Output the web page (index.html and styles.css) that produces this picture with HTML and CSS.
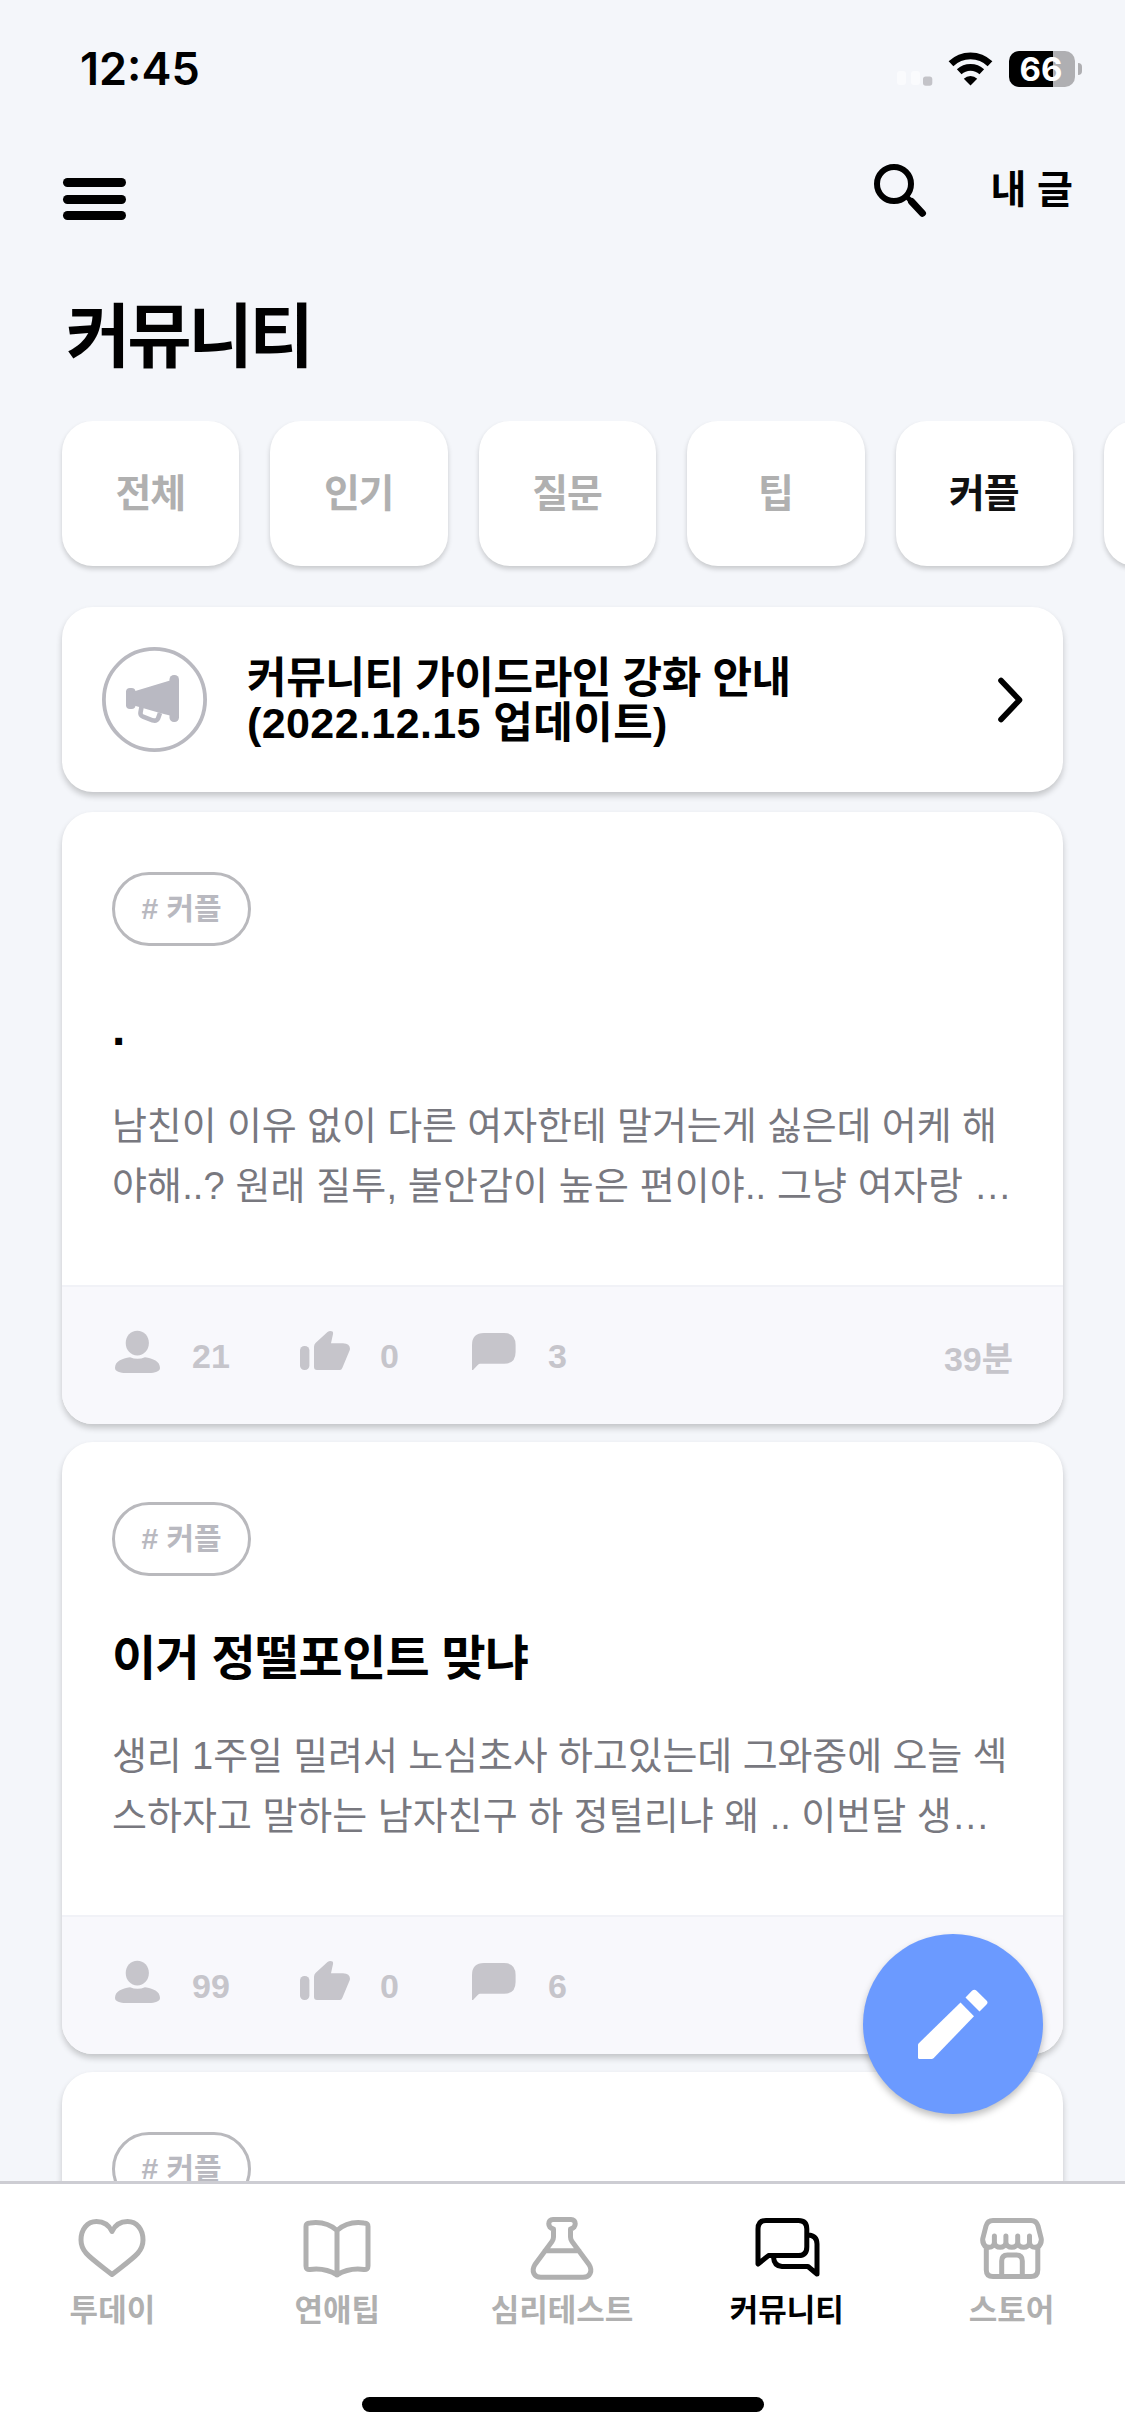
FILE: index.html
```html
<!DOCTYPE html>
<html lang="ko">
<head>
<meta charset="utf-8">
<title>커뮤니티</title>
<link rel="stylesheet" href="styles.css">
</head>
<body>
<svg class="defs" aria-hidden="true">
  <symbol id="person" viewBox="0 0 50 44">
    <path d="M25.3.7c6.6 0 11.600 5.200 11.600 12.300s-5 12.400-11.600 12.400-11.600-5.300-11.600-12.400S18.700.700 25.300.700z"/>
    <path d="M18 27.200Q25.500 30.500 33 27.200C41 28.500 48 31 48 38 48 41.500 43 43 37 43H14C8 43 3 41.500 3 38 3 31 10 28.500 18 27.200z"/>
  </symbol>
  <symbol id="thumb" viewBox="0 0 50 44">
    <rect x="0" y="16" width="9.400" height="24" rx="4.500"/>
    <path d="M14 17Q14 14.500 15.500 13L27.500 2Q30 .200 32.500 1.500 33.500 2.500 32.800 5L31 13.300H43Q51 14 49.800 20L42.500 37.500Q41.500 40 40 40H17Q14 40 14 37z"/>
  </symbol>
  <symbol id="bubble" viewBox="0 0 46 44">
    <path d="M0 40V15Q0 3 12 3H32Q43.600 3 43.600 15V22Q43.600 33.800 32 33.800H8Q7 33.800 6 34.800L1 40z"/>
  </symbol>
</svg>

<div class="status">
  <span class="clock">12:45</span>
  <div class="status-icons">
    <svg class="signal" width="38" height="16" viewBox="0 0 38 16">
      <rect x="2" y="1" width="9" height="14" rx="3" fill="#fafbfd"/>
      <rect x="16" y="1" width="9" height="14" rx="3" fill="#fafbfd"/>
      <rect x="28" y="6.500" width="9.300" height="9.300" rx="2.800" fill="#c3c3c8"/>
    </svg>
    <svg class="wifi" width="45" height="34" viewBox="0 0 45 34">
      <path d="M3 11.800A28 28 0 0 1 42 11.800M11.200 19.800A16.600 16.600 0 0 1 33.800 19.800" fill="none" stroke="#000" stroke-width="6.800"/>
      <path d="M22.500 33.500L15.800 26.800A9.600 9.600 0 0 1 29.200 26.800z"/>
    </svg>
    <div class="battery"><span>66</span></div>
    <i class="battery-cap"></i>
  </div>
</div>

<header class="topbar">
  <button class="menu" aria-label="메뉴"><i></i><i></i><i></i></button>
  <div class="top-actions">
    <svg width="56" height="56" viewBox="0 0 56 56" fill="none" stroke="#000" stroke-linecap="round">
      <circle cx="22" cy="22" r="17" stroke-width="6"/>
      <path d="M35 35l4 4" stroke-width="5"/>
      <path d="M39.500 39.500L50.500 51.300" stroke-width="7"/>
    </svg>
    <span class="mine">내 글</span>
  </div>
</header>

<h1>커뮤니티</h1>

<nav class="chips">
  <span>전체</span><span>인기</span><span>질문</span><span>팁</span><span class="on">커플</span><span></span>
</nav>

<main class="feed">
  <section class="notice">
    <svg width="105" height="105" viewBox="0 0 105 105" fill="#b9b9c2">
      <circle cx="52.500" cy="52.500" r="50.600" fill="none" stroke="#b9b9c0" stroke-width="3.800"/>
      <rect x="24" y="41" width="9.500" height="21" rx="4"/>
      <rect x="24" y="44" width="4" height="15"/>
      <path d="M30 45L68 33.500Q73 40 77 40V65Q73 65 70 69L58 66 32 58.500z"/>
      <rect x="67.500" y="28" width="9.500" height="47" rx="4.500"/>
      <path d="M39.500 60L38.500 65.500Q38 68.500 41 69.700L50.500 73.300Q54.500 74.500 56 71.500L58 66" fill="none" stroke="#b9b9c2" stroke-width="4.600"/>
    </svg>
    <p><span class="l1">커뮤니티 가이드라인 강화 안내</span><br><span class="l2">(2022.12.15 업데이트)</span></p>
    <svg class="chevron" width="28" height="48" viewBox="0 0 28 48" fill="none" stroke="#000" stroke-width="5.600" stroke-linecap="round" stroke-linejoin="round"><path d="M4 4.500L22.500 24 4 43.500"/></svg>
  </section>

  <article class="post">
    <div class="content">
      <span class="tag"># 커플</span>
      <h2>.</h2>
      <p><span class="tight">남친이 이유 없이 다른 여자한테 말거는게 싫은데 어케 해</span><br><span class="loose">야해..? 원래 질투, 불안감이 높은 편이야.. 그냥 여자랑 …</span></p>
    </div>
    <footer>
      <div class="stat views"><svg width="50" height="44"><use href="#person"/></svg><b>21</b></div>
      <div class="stat likes"><svg width="50" height="44"><use href="#thumb"/></svg><b>0</b></div>
      <div class="stat replies"><svg width="46" height="44"><use href="#bubble"/></svg><b>3</b></div>
      <time>39분</time>
    </footer>
  </article>

  <article class="post">
    <div class="content">
      <span class="tag"># 커플</span>
      <h2>이거 정떨포인트 맞냐</h2>
      <p><span class="tight">생리 1주일 밀려서 노심초사 하고있는데 그와중에 오늘 섹</span><br>스하자고 말하는 남자친구 하 정털리냐 왜 .. 이번달 생…</p>
    </div>
    <footer>
      <div class="stat views"><svg width="50" height="44"><use href="#person"/></svg><b>99</b></div>
      <div class="stat likes"><svg width="50" height="44"><use href="#thumb"/></svg><b>0</b></div>
      <div class="stat replies"><svg width="46" height="44"><use href="#bubble"/></svg><b>6</b></div>
    </footer>
  </article>

  <article class="post">
    <div class="content">
      <span class="tag"># 커플</span>
    </div>
  </article>
</main>

<button class="compose" aria-label="글쓰기">
  <svg width="70" height="70" viewBox="0 0 70 70" fill="#fff">
    <path d="M0 56Q0 55 .800 54.200L42.500 13.500 56 27.300 15.500 69.200Q14.700 70 13.500 70H1.500Q0 70 0 68.500z"/>
    <path d="M47.500 8.500L54 1.800Q56.300-.500 58.600 1.800L68.500 11.500Q70.500 13.500 68.500 15.500L61.500 22.500z"/>
  </svg>
</button>

<nav class="tabs">
  <a><svg viewBox="0 0 72 66"><path d="M36 15.500C33 9 27.500 5.500 20.500 5.500 11 5.500 5 13.500 5 24 5 36 13 40.500 36 58.500 59 40.500 67 36 67 24 67 13.500 61 5.500 51.500 5.500 44.500 5.500 39 9 36 15.500z"/></svg>투데이</a>
  <a><svg viewBox="0 0 72 66"><path d="M36 59V14.500C27 6.500 17.500 5.800 9 7 6 7.300 5 8 5 10.500V50Q5 54 9 53.500C20 52 28 54 36 59 44 54 52 52 63 53.500Q67 54 67 50V10.500C67 8 66 7.300 63 7 54.500 5.800 45 6.500 36 14.500"/></svg>연애팁</a>
  <a><svg viewBox="0 0 72 66"><path d="M27.500 21V13C21 12 21.500 3.400 27 3.400H45C50.500 3.400 51 12 44.500 13V21Q44.500 23.500 46 25.500L63 48.500C67 55 64 61.300 57 61.300H15C8 61.300 5 55 9 48.500L26 25.500Q27.500 23.500 27.500 21zM19 34.700H53"/></svg>심리테스트</a>
  <a class="on"><svg viewBox="0 0 72 66"><path d="M7 48V13Q7 4.400 15 4.400H47.500Q55.800 4.400 55.800 13V31Q55.800 39.600 47.500 39.600H17.500L7 48zM57 19Q66 19.500 66 28V58L57 50.500H31Q23 50 22.500 41"/></svg>커뮤니티</a>
  <a><svg viewBox="0 0 72 66"><path d="M10.500 31.500Q6 28 6.800 22.500L10 10Q11.500 4.400 17 4.400H55Q60.500 4.400 62 10L65.200 22.500Q66 28 61.500 31.500M7 25C8 33.500 18.400 33 18.400 26V20V26C18.400 33 29.900 33 29.900 26V20V26C29.900 33 41.700 33 41.700 26V20V26C41.700 33 53.500 33 53.500 26V20V26C53.500 33 64 33.500 65 25M10.300 31V54Q10.300 60.500 17 60.500H55Q61.800 60.500 61.800 54V31M25.700 60V45Q25.700 39 31.500 39H40.500Q46.300 39 46.300 45V60"/></svg>스토어</a>
  <i class="home"></i>
</nav>
</body>
</html>
```

FILE: styles.css
```css
* { box-sizing: border-box; }

body {
  margin: 0;
  width: 1125px;
  height: 2436px;
  overflow: hidden;
  position: relative;
  display: flex;
  flex-direction: column;
  background: #f4f6fa;
  color: #000;
  font-family: "Liberation Sans", "Noto Sans CJK KR", sans-serif;
}

button { border: 0; padding: 0; background: none; }
h1, h2, p { margin: 0; }
svg { display: block; flex: none; }
.defs { position: absolute; width: 0; height: 0; }

/* Status bar */
.status {
  height: 138px;
  flex: none;
  padding: 0 43px 0 80px;
  display: flex;
  align-items: center;
  justify-content: space-between;
}
.clock {
  font: 600 45px/60px Inter, sans-serif;
}
.status-icons { display: flex; align-items: center; }
.signal { margin: 17px 15px 0 0; }
.wifi { margin-right: 16px; }
.battery {
  width: 66px;
  height: 36px;
  border-radius: 10px;
  background: linear-gradient(90deg, #000 44px, #afafb2 44px);
  color: #fff;
  padding-right: 2px;
  font: 700 33px/36px Inter, sans-serif;
  text-align: center;
}
.battery-cap {
  width: 4px;
  height: 12px;
  margin-left: 3px;
  border-radius: 0 5px 5px 0;
  background: #afafb2;
}

/* Top bar */
.topbar {
  height: 102px;
  flex: none;
  padding: 0 52px 0 63px;
  display: flex;
  justify-content: space-between;
}
.menu {
  margin-top: 40px;
  width: 63px;
  height: 42px;
  display: flex;
  flex-direction: column;
  justify-content: space-between;
}
.menu i { width: 100%; height: 9px; border-radius: 5px; background: #000; }
.top-actions { display: flex; padding-top: 24px; }
.mine {
  margin-left: 62px;
  font-size: 39px;
  line-height: 56px;
  font-weight: 700;
}

h1 {
  flex: none;
  margin: 50px 0 35px 66px;
  font-size: 70px;
  line-height: 96px;
  letter-spacing: -3.200px;
}

/* Category chips */
.chips {
  flex: none;
  display: flex;
  gap: 31px;
  height: 165px;
  margin-bottom: -20px;
  padding-left: 62px;
  overflow: hidden;
}
.chips span {
  flex: none;
  width: 177.400px;
  height: 145px;
  border-radius: 31px;
  background: #fff;
  box-shadow: 0 3px 5px rgba(0, 0, 0, .18);
  color: #b0b0b0;
  font-size: 39px;
  font-weight: 700;
  line-height: 145px;
  letter-spacing: -1.200px;
  padding-right: 1px;
  text-align: center;
}
.chips .on { color: #111; }

/* Feed */
.feed {
  flex: 1;
  min-height: 0;
  overflow: hidden;
  padding: 41px 62px 0 62px;
}
.notice, .post {
  border-radius: 31px;
  background: #fff;
  box-shadow: 0 4px 6px rgba(0, 0, 0, .2);
}
.notice {
  height: 185px;
  margin-bottom: 20px;
  padding: 0 38px 0 40px;
  display: flex;
  align-items: center;
}
.notice p {
  margin-left: 40px;
  padding-top: 3px;
  font-size: 43px;
  line-height: 45px;
  font-weight: 700;
}
.l1 { letter-spacing: -.400px; }
.l2 { letter-spacing: .400px; }
.chevron { margin-left: auto; }

.post {
  height: 612px;
  margin-bottom: 18px;
  overflow: hidden;
}
.content { height: 473px; padding: 60px 50px 0; }
.tag {
  display: block;
  width: 139px;
  height: 74px;
  border: 3px solid #b9b9bd;
  border-radius: 37px;
  color: #b9b9c0;
  font-size: 30px;
  font-weight: 700;
  line-height: 68px;
  text-align: center;
}
.post h2 {
  margin-top: 53px;
  font-size: 48px;
  line-height: 60px;
  letter-spacing: -.700px;
}
.post p {
  margin-top: 37px;
  color: #78787f;
  font-size: 38px;
  line-height: 60px;
  white-space: nowrap;
}
.tight { letter-spacing: -.120px; }
.loose { letter-spacing: .120px; }
.post footer {
  height: 139px;
  padding: 43px 50px 0;
  border-top: 2px solid #f1f2f7;
  background: #f8f8fc;
  display: flex;
  color: #c6c5cb;
  fill: #c6c5cb;
  font-size: 34px;
  font-weight: 700;
  line-height: 44px;
}
.stat { display: flex; gap: 30px; }
.stat b { margin-top: 4px; }
.views { width: 188px; }
.likes { width: 172px; }
.post time { margin: 7px 0 0 auto; font-size: 34px; }

/* Floating compose button */
.compose {
  position: absolute;
  left: 863px;
  top: 1934px;
  width: 180px;
  height: 180px;
  border-radius: 50%;
  background: #6b9aff;
  box-shadow: 0 4px 7px rgba(0, 0, 0, .25);
  display: flex;
  align-items: center;
  justify-content: center;
}

/* Bottom tabs */
.tabs {
  position: relative;
  flex: none;
  height: 255px;
  padding: 32px 1px 0 0;
  border-top: 3px solid #cdcdd3;
  background: #fff;
  display: flex;
}
.tabs a {
  flex: 1 0 0;
  display: flex;
  flex-direction: column;
  align-items: center;
  gap: 11px;
  color: #b0b0b0;
  font-size: 31px;
  font-weight: 700;
  line-height: 36px;
}
.tabs svg {
  width: 72px;
  height: 66px;
  fill: none;
  stroke: #b0b0b0;
  stroke-width: 5;
  stroke-linejoin: round;
  stroke-linecap: round;
}
.tabs .on { color: #000; }
.tabs .on svg { stroke: #000; }
.home {
  position: absolute;
  left: 362px;
  bottom: 24px;
  width: 402px;
  height: 15px;
  border-radius: 8px;
  background: #000;
}
```
